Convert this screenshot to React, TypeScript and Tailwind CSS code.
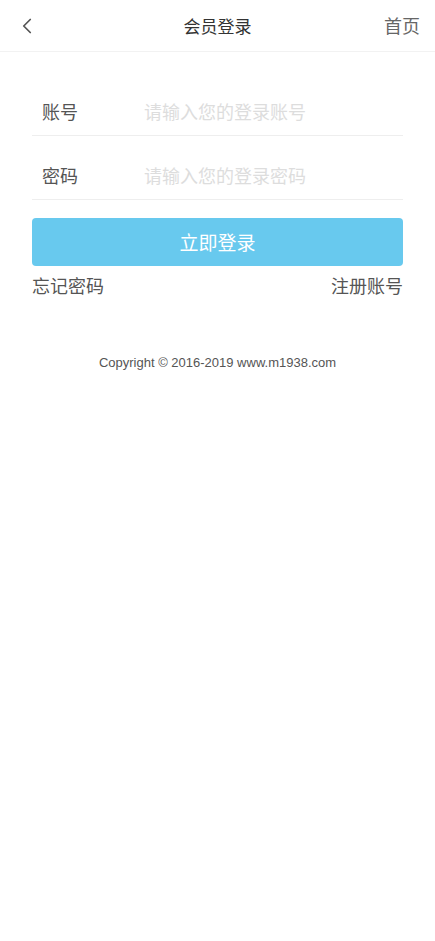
import { ChevronLeft } from 'lucide-react';

const cjk = "font-['Noto_Sans_CJK_SC','Noto_Sans',sans-serif]";

function Field({ label, placeholder, type }: { label: string; placeholder: string; type: string }) {
	return (
		<div className="flex h-16 items-end border-b border-[#eeeeee] pb-[11px]">
			<span className="w-[112px] pl-[10px] text-[18px] leading-[26px] text-[#555555]">{label}</span>
			<input
				type={type}
				placeholder={placeholder}
				className="flex-1 bg-transparent text-[18px] leading-[26px] text-[#333333] outline-none placeholder:text-[#dddddd]"
			/>
		</div>
	);
}

export default function App() {
	return (
		<div className={`min-h-[941px] bg-white ${cjk}`}>
			<header className="relative flex h-[52px] items-center justify-center border-b border-[#f2f2f2]">
				<button type="button" className="absolute left-[14px] top-[13px] text-[#555555]">
					<ChevronLeft className="h-[26px] w-[26px]" strokeWidth={1.6} />
				</button>
				<h1 className="text-[17px] text-[#333333]">会员登录</h1>
				<a className="absolute right-[15px] top-[12px] text-[18px] text-[#666666]">首页</a>
			</header>

			<form className="mx-8 mt-5" onSubmit={(e) => e.preventDefault()}>
				<Field label="账号" placeholder="请输入您的登录账号" type="text" />
				<Field label="密码" placeholder="请输入您的登录密码" type="password" />
				<button
					type="submit"
					className="mt-[18px] flex h-12 w-full items-center justify-center rounded-[4px] bg-[#68c9ee] text-[19px] text-white"
				>
					立即登录
				</button>
				<div className="mt-[6px] flex justify-between text-[18px] text-[#555555]">
					<a>忘记密码</a>
					<a>注册账号</a>
				</div>
			</form>

			<p className="mt-[54px] text-center font-['Liberation_Sans',Arial,sans-serif] text-[13px] text-[#555555]">
				Copyright © 2016-2019 www.m1938.com
			</p>
		</div>
	);
}
